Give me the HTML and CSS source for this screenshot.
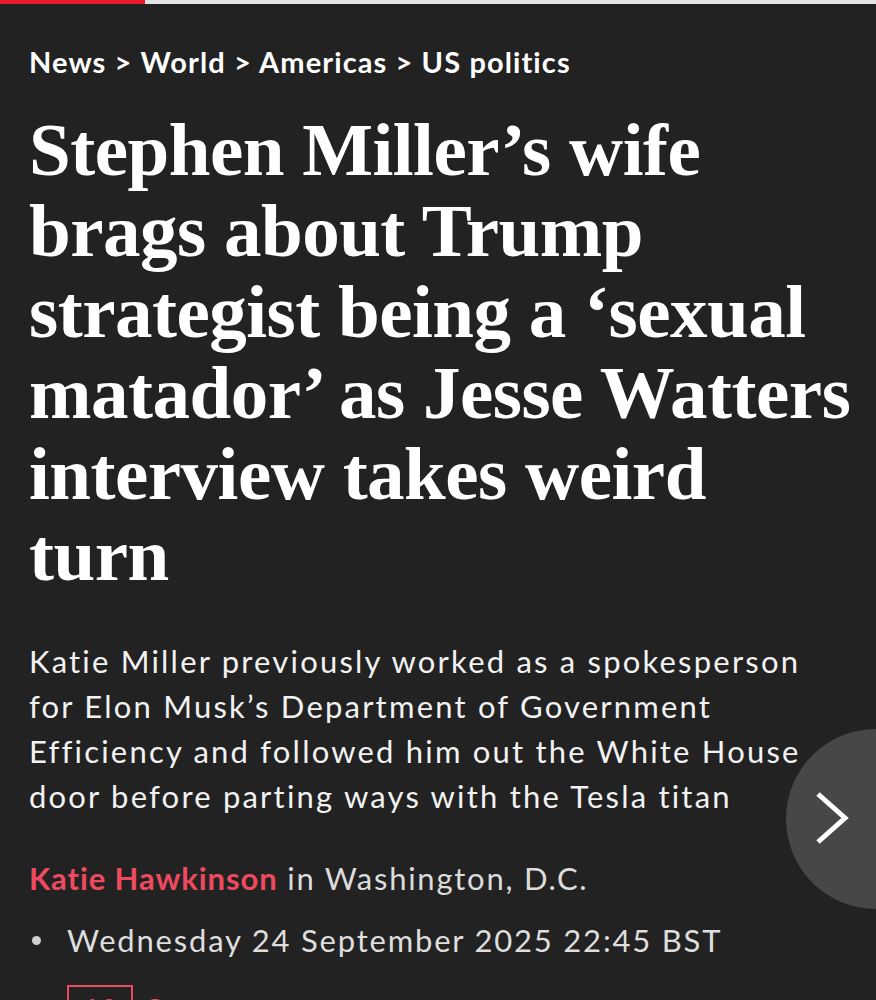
FILE: index.html
```html
<!DOCTYPE html>
<html lang="en">
<head>
    <meta charset="UTF-8">
    <meta name="viewport" content="width=device-width, initial-scale=1.0">
    <title>Stephen Miller's wife brags about Trump strategist</title>
    <link rel="stylesheet" href="styles.css">
</head>
<body>
    <div class="progress"><div class="progress-fill"></div></div>
    <article class="article">
        <nav class="breadcrumb">
            <a href="#">News</a> &gt; <a href="#">World</a> &gt; <a href="#">Americas</a> &gt; <a href="#">US politics</a>
        </nav>
        <h1 class="headline">Stephen Miller&rsquo;s wife brags about Trump strategist being a &lsquo;sexual matador&rsquo; as Jesse Watters interview takes weird turn</h1>
        <p class="standfirst">Katie Miller previously worked as a spokesperson for Elon Musk&rsquo;s Department of Government Efficiency and followed him out the White House door before parting ways with the Tesla titan</p>
        <p class="byline"><a class="author" href="#">Katie Hawkinson</a> in Washington, D.C.</p>
        <ul class="meta">
            <li class="date">Wednesday 24 September 2025 22:45 BST</li>
            <li class="comments"><span class="count">60</span> <a href="#">Comments</a></li>
        </ul>
    </article>
    <button class="next" aria-label="Next article">
        <svg width="34" height="54" viewBox="0 0 34 54"><path d="M3 3 L30 27 L3 51" fill="none" stroke="#fff" stroke-width="5"/></svg>
    </button>
</body>
</html>
```

FILE: styles.css
```css
body {
    margin: 0;
    background-color: #222222;
    color: #f4f4f4;
    font-family: Lato, "Open Sans", sans-serif;
    overflow: hidden;
}
a {
    color: inherit;
    text-decoration: none;
}
.progress {
    height: 4px;
    background: #e4e4e4;
}
.progress-fill {
    width: 145px;
    height: 100%;
    background: #e8192c;
}
.article {
    padding: 0 20px 0 29px;
}
.breadcrumb {
    margin-top: 41px;
    font-size: 29px;
    line-height: 34px;
    font-weight: bold;
    letter-spacing: 1.1px;
    color: #fff;
}
.headline {
    margin: 30px 0 0;
    font-family: "Liberation Serif", serif;
    font-size: 75px;
    line-height: 81px;
    font-weight: bold;
    letter-spacing: -0.5px;
    color: #fff;
}
.standfirst {
    width: 790px;
    margin: 44px 0 0;
    font-size: 31px;
    line-height: 45px;
    letter-spacing: 2.2px;
    color: #f2f2f2;
}
.byline {
    margin: 37px 0 0;
    font-size: 31px;
    line-height: 45px;
    letter-spacing: 1.75px;
    color: #dcdcdc;
}
.author {
    color: #ee4a5f;
    font-weight: bold;
    letter-spacing: 0.9px;
}
.meta {
    list-style: none;
    margin: 17px 0 0;
    padding: 0 0 0 38px;
    font-size: 31px;
    line-height: 45px;
    letter-spacing: 1.8px;
    color: #dedede;
}
.date {
    position: relative;
}
.date::before {
    content: "";
    position: absolute;
    left: -35px;
    top: 18px;
    width: 9px;
    height: 9px;
    border-radius: 50%;
    background: #d0d0d0;
}
.comments {
    margin-top: 22px;
    color: #ee4a5f;
}
.count {
    display: inline-block;
    border: 2px solid #ee4a5f;
    width: 62px;
    text-align: center;
}
.next {
    position: absolute;
    left: 786px;
    top: 729px;
    width: 180px;
    height: 180px;
    border: none;
    border-radius: 50%;
    background: #474747;
    padding: 0 0 0 29px;
    text-align: left;
}
```
